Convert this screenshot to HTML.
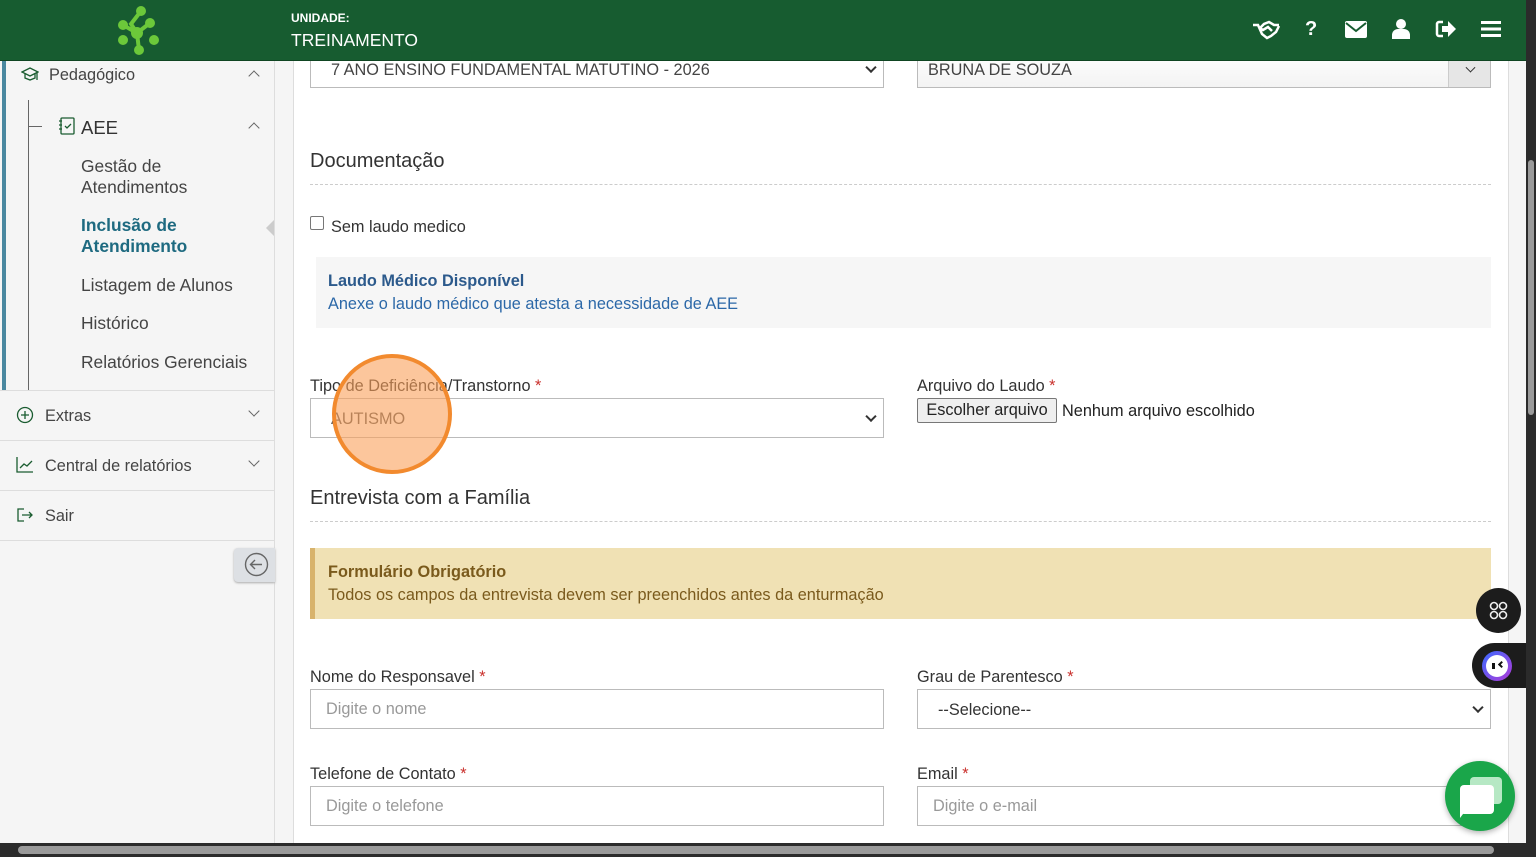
<!DOCTYPE html>
<html><head><meta charset="utf-8"><style>
*{box-sizing:border-box;margin:0;padding:0}
body{width:1536px;height:857px;overflow:hidden;font-family:"Liberation Sans",sans-serif;background:#f5f5f5;position:relative;color:#333}
.hdr{position:absolute;left:0;top:0;width:1526px;height:61px;background:#175c30;z-index:5;border-bottom:1px solid #0f4522}
.side{position:absolute;left:0;top:61px;width:275px;height:782px;background:#f5f5f5;border-right:1px solid #ddd}
.card{position:absolute;left:293px;top:61px;width:1216px;height:782px;background:#fff;border-left:1px solid #ddd;border-right:1px solid #ddd}
.vs{position:absolute;left:1526px;top:0;width:10px;height:857px;background:#2b2b2b}
.hs{position:absolute;left:0;top:843px;width:1526px;height:14px;background:#2b2b2b}
.t{position:absolute;white-space:nowrap}
.sel{position:absolute;border:1px solid #bbb;background:#fff;font-size:16.3px;color:#444;padding-left:20px;display:flex;align-items:center}
.sel .ch{position:absolute;right:8px;top:50%;width:8px;height:8px;border-right:2px solid #333;border-bottom:2px solid #333;transform:translateY(-70%) rotate(45deg)}
.h{font-size:20px;color:#333}
.dash{position:absolute;left:310px;width:1181px;border-top:1px dashed #ccc}
.lbl{font-size:16.3px;color:#333}
.lbl b{color:#c9302c;font-weight:normal}
.inp{position:absolute;border:1px solid #bbb;background:#fff;font-size:16.3px;color:#999;padding-left:16px;display:flex;align-items:center}
.nav{font-size:17.4px;color:#444}
.sep{position:absolute;left:0;width:275px;border-top:1px solid #ddd}
.chev{position:absolute;width:8px;height:8px;border-left:1.5px solid #666;border-top:1.5px solid #666}
</style></head><body>
<div class="side"></div>
<div class="card"></div>
<div class="hdr">
<svg style="position:absolute;left:113px;top:4px" width="52" height="52" viewBox="0 0 52 52" fill="#6cc83a">
<circle cx="28" cy="7" r="5"/><circle cx="37" cy="19" r="5"/><circle cx="10" cy="21" r="5"/><circle cx="10" cy="36" r="5"/><circle cx="41" cy="36" r="5"/><circle cx="26" cy="46" r="5"/><circle cx="24" cy="29" r="6"/>
<path d="M28 7 L18 20 L24 29 L37 19 M24 29 L26 46 M10 21 L24 29" stroke="#6cc83a" stroke-width="4" fill="none"/></svg>
<div class="t" style="left:291px;top:11px;font-size:12px;font-weight:bold;color:#fff">UNIDADE:</div>
<div class="t" style="left:291px;top:30px;font-size:17.5px;color:#fff">TREINAMENTO</div>
<svg style="position:absolute;left:1251px;top:20px" width="30" height="20" viewBox="0 0 30 20" fill="none" stroke="#fff" stroke-width="2.5"><path d="M2 5h5l4 9 5 4 4-2 5-4 3-6M28 5h-5l-5-3-5 2-4 4 3 2 5-3 4 4"/></svg>
<div class="t" style="left:1305px;top:18px;font-size:20px;font-weight:bold;color:#fff">?</div>
<svg style="position:absolute;left:1345px;top:21px" width="22" height="17" viewBox="0 0 22 17"><rect width="22" height="17" rx="2" fill="#fff"/><path d="M1 2l10 8 10-8" stroke="#175c30" stroke-width="2" fill="none"/></svg>
<svg style="position:absolute;left:1392px;top:19px" width="18" height="20" viewBox="0 0 18 20" fill="#fff"><circle cx="9" cy="5" r="5"/><path d="M0 20v-4a6 6 0 0 1 6-6h6a6 6 0 0 1 6 6v4z"/></svg>
<svg style="position:absolute;left:1435px;top:20px" width="21" height="18" viewBox="0 0 21 18"><path d="M8 2H4a2 2 0 0 0-2 2v10a2 2 0 0 0 2 2h4" stroke="#fff" stroke-width="2.5" fill="none"/><path d="M7 6h6V1l8 8-8 8v-5H7z" fill="#fff"/></svg>
<svg style="position:absolute;left:1481px;top:21px" width="20" height="16"><rect y="0" width="20" height="3" fill="#fff"/><rect y="6.5" width="20" height="3" fill="#fff"/><rect y="13" width="20" height="3" fill="#fff"/></svg>
</div>

<div style="position:absolute;left:2px;top:61px;width:4px;height:329px;background:#4a88a0"></div>
<div style="position:absolute;left:28px;top:100px;width:1px;height:290px;background:#666"></div>
<div style="position:absolute;left:28px;top:126px;width:14px;height:1px;background:#666"></div>
<svg style="position:absolute;left:21px;top:67px" width="18" height="16" viewBox="0 0 18 16" fill="none" stroke="#1a5c30" stroke-width="1.3"><path d="M1 5l8-4 8 4-8 4z M4 7v4l5 2 5-2V7 M16 5v8"/></svg>
<div class="t nav" style="left:49px;top:66px;font-size:16.3px">Pedagógico</div>
<div class="chev" style="left:250px;top:72px;transform:rotate(45deg)"></div>
<svg style="position:absolute;left:58px;top:117px" width="18" height="18" viewBox="0 0 18 18" fill="none" stroke="#1a5c30" stroke-width="1.3"><rect x="3" y="1" width="13" height="16" rx="1"/><path d="M1 4h3M1 8h3M1 12h3M7 9l2 2 4-4"/></svg>
<div class="t nav" style="left:81px;top:117px;font-size:18.5px;color:#333">AEE</div>
<div class="chev" style="left:250px;top:124px;transform:rotate(45deg)"></div>
<div class="t nav" style="left:81px;top:156px;line-height:21px">Gestão de<br>Atendimentos</div>
<div class="t nav" style="left:81px;top:215px;line-height:21px;font-weight:bold;color:#1e6a80">Inclusão de<br>Atendimento</div>
<div style="position:absolute;left:266px;top:220px;border:5px solid transparent;border-right:8px solid #ccc;border-left:0;height:0;width:0;border-top-width:8px;border-bottom-width:8px"></div>
<div class="t nav" style="left:81px;top:275px">Listagem de Alunos</div>
<div class="t nav" style="left:81px;top:313px">Histórico</div>
<div class="t nav" style="left:81px;top:352px">Relatórios Gerenciais</div>
<div class="sep" style="top:390px"></div>
<div class="sep" style="top:440px"></div>
<div class="sep" style="top:490px"></div>
<div class="sep" style="top:540px"></div>
<svg style="position:absolute;left:16px;top:406px" width="18" height="18" viewBox="0 0 18 18" fill="none" stroke="#1a5c30" stroke-width="1.3"><circle cx="9" cy="9" r="7.5"/><path d="M9 5v8M5 9h8"/></svg>
<div class="t nav" style="left:45px;top:407px;font-size:16.3px">Extras</div>
<div class="chev" style="left:250px;top:407px;transform:rotate(-135deg)"></div>
<svg style="position:absolute;left:16px;top:456px" width="18" height="17" viewBox="0 0 18 17" fill="none" stroke="#1a5c30" stroke-width="1.3"><path d="M1 1v15h16M4 12l4-4 3 2 5-5"/></svg>
<div class="t nav" style="left:45px;top:457px;font-size:16.3px">Central de relatórios</div>
<div class="chev" style="left:250px;top:457px;transform:rotate(-135deg)"></div>
<svg style="position:absolute;left:16px;top:507px" width="18" height="16" viewBox="0 0 18 16" fill="none" stroke="#1a5c30" stroke-width="1.3"><path d="M8 2H2v12h6M6 8h10M13 5l3 3-3 3"/></svg>
<div class="t nav" style="left:45px;top:507px;font-size:16.3px">Sair</div>
<div style="position:absolute;left:234px;top:548px;width:41px;height:34px;background:#dde0e4;border-radius:4px 0 0 4px;box-shadow:0 1px 2px #aaa"></div>
<svg style="position:absolute;left:244px;top:552px" width="25" height="25" viewBox="0 0 25 25" fill="none" stroke="#666" stroke-width="1.4"><circle cx="12.5" cy="12.5" r="11"/><path d="M18 12.5H7M11 8l-4.5 4.5L11 17"/></svg>

<div class="sel" style="left:310px;top:50px;width:574px;height:38px;padding-top:2px;padding-left:20px">7 ANO ENSINO FUNDAMENTAL MATUTINO - 2026<span class="ch"></span></div>
<div class="sel" style="left:917px;top:50px;width:574px;height:38px;padding-left:10px;padding-top:2px;background:linear-gradient(#fff,#f3f3f3)">BRUNA DE SOUZA<div style="position:absolute;right:0;top:0;width:42px;height:36px;background:#e6e6e6;border-left:1px solid #ccc"></div><span class="ch" style="right:16px;width:7px;height:7px;border-width:1.5px"></span></div>

<div class="t h" style="left:310px;top:150px">Documentação</div>
<div class="dash" style="top:184px"></div>
<div style="position:absolute;left:310px;top:216px;width:14px;height:14px;border:1px solid #777;border-radius:2px;background:#fff"></div>
<div class="t lbl" style="left:331px;top:218px">Sem laudo medico</div>
<div style="position:absolute;left:316px;top:257px;width:1175px;height:71px;background:#f6f6f6"></div>
<div class="t" style="left:328px;top:272px;font-size:16.3px;font-weight:bold;color:#2c5a8c">Laudo Médico Disponível</div>
<div class="t" style="left:328px;top:295px;font-size:16.3px;color:#2c68a8">Anexe o laudo médico que atesta a necessidade de AEE</div>

<div class="t lbl" style="left:310px;top:377px">Tipo de Deficiência/Transtorno <b>*</b></div>
<div class="sel" style="left:310px;top:398px;width:574px;height:40px;padding-left:20px;color:#555;padding-top:2px">AUTISMO<span class="ch"></span></div>
<div class="t lbl" style="left:917px;top:377px">Arquivo do Laudo <b>*</b></div>
<div style="position:absolute;left:917px;top:398px;width:140px;height:25px;border:1px solid #777;background:#efefef;border-radius:2px;font-size:16.3px;color:#222;text-align:center;line-height:23px">Escolher arquivo</div>
<div class="t lbl" style="left:1062px;top:402px;color:#222">Nenhum arquivo escolhido</div>
<div style="position:absolute;left:332px;top:354px;width:120px;height:120px;border-radius:50%;background:rgba(250,160,90,.6);border:4px solid #f28a2e"></div>

<div class="t h" style="left:310px;top:487px">Entrevista com a Família</div>
<div class="dash" style="top:521px"></div>
<div style="position:absolute;left:310px;top:548px;width:1181px;height:71px;background:#f0e1b4;border-left:5px solid #d8b36c"></div>
<div class="t" style="left:328px;top:563px;font-size:16.3px;font-weight:bold;color:#7a5a1c">Formulário Obrigatório</div>
<div class="t" style="left:328px;top:586px;font-size:16.3px;color:#7a5a1c">Todos os campos da entrevista devem ser preenchidos antes da enturmação</div>

<div class="t lbl" style="left:310px;top:668px">Nome do Responsavel <b>*</b></div>
<div class="inp" style="left:310px;top:689px;width:574px;height:40px;padding-left:15px">Digite o nome</div>
<div class="t lbl" style="left:917px;top:668px">Grau de Parentesco <b>*</b></div>
<div class="sel" style="left:917px;top:689px;width:574px;height:40px;color:#333;padding-top:2px">--Selecione--<span class="ch"></span></div>
<div class="t lbl" style="left:310px;top:765px">Telefone de Contato <b>*</b></div>
<div class="inp" style="left:310px;top:786px;width:574px;height:40px;padding-left:15px">Digite o telefone</div>
<div class="t lbl" style="left:917px;top:765px">Email <b>*</b></div>
<div class="inp" style="left:917px;top:786px;width:574px;height:40px;padding-left:15px">Digite o e-mail</div>

<div style="position:absolute;left:1476px;top:588px;width:45px;height:45px;border-radius:50%;background:#1c1c1c"></div>
<svg style="position:absolute;left:1488px;top:600px" width="21" height="21" viewBox="0 0 21 21" fill="none" stroke="#eee" stroke-width="1.6"><circle cx="6" cy="6" r="3.5"/><circle cx="15" cy="6" r="3.5"/><circle cx="6" cy="15" r="3.5"/><circle cx="15" cy="15" r="3.5"/></svg>
<div style="position:absolute;left:1472px;top:643px;width:64px;height:45px;border-radius:23px 0 0 23px;background:#1c1c1c"></div>
<div style="position:absolute;left:1482px;top:651px;width:30px;height:30px;border-radius:50%;background:linear-gradient(135deg,#3a6bff,#b03ad8)"></div>
<div style="position:absolute;left:1486px;top:655px;width:22px;height:22px;border-radius:50%;background:#fff"></div>
<div style="position:absolute;left:1492px;top:663px;width:3px;height:6px;background:#111"></div>
<div style="position:absolute;left:1499px;top:662px;width:5px;height:5px;border-left:2px solid #111;border-bottom:2px solid #111;transform:rotate(45deg)"></div>
<div style="position:absolute;left:1445px;top:761px;width:70px;height:70px;border-radius:50%;background:#1aa64a;box-shadow:0 2px 6px rgba(0,0,0,.3)"></div>
<div style="position:absolute;left:1470px;top:777px;width:32px;height:27px;border-radius:4px;background:#b6e8c4"></div>
<div style="position:absolute;left:1460px;top:785px;width:34px;height:29px;border-radius:4px;background:#fff"></div>
<div style="position:absolute;left:1460px;top:810px;border-left:6px solid #fff;border-bottom:8px solid transparent"></div>

<div class="vs"><div style="position:absolute;left:2px;top:160px;width:6px;height:255px;background:#9a9a9a;border-radius:3px"></div></div>
<div class="hs"><div style="position:absolute;left:18px;top:3px;width:1476px;height:8px;background:#9a9a9a;border-radius:4px"></div></div>
</body></html>
